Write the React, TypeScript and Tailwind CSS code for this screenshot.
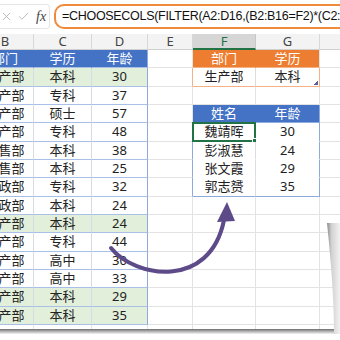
import { Check, X } from "lucide-react";

const widths = ["w-[57px]", "w-[58px]", "w-[56px]", "w-[45px]", "w-[63px]", "w-[64px]", "w-[60px]"];
const letters = ["B", "C", "D", "E", "F", "G", "H"];

const data = [
    ["生产部", "本科", "30"],
    ["生产部", "专科", "37"],
    ["生产部", "硕士", "57"],
    ["生产部", "专科", "48"],
    ["销售部", "本科", "38"],
    ["销售部", "本科", "25"],
    ["行政部", "专科", "32"],
    ["行政部", "本科", "24"],
    ["生产部", "本科", "24"],
    ["生产部", "专科", "44"],
    ["生产部", "高中", "30"],
    ["生产部", "高中", "33"],
    ["生产部", "本科", "29"],
    ["生产部", "本科", "35"],
];

const result = [
    ["魏靖晖", "30"],
    ["彭淑慧", "24"],
    ["张文霞", "29"],
    ["郭志赟", "35"],
];

// right border colour between (r, c) and its neighbour
function rightLine(r: number, c: number) {
    if (c <= 1 && r >= 1 && r <= 15) return r === 1 ? "border-r-[#4472c4]" : "border-r-[#d6dbe4]";
    if (c === 2 && r <= 15) return "border-r-[#8ea9db]";
    if (c === 3) {
        if (r === 2) return "border-r-[#f4b183]";
        if (r >= 5 && r <= 8) return "border-r-[#8ea9db]";
    }
    if (c === 4) {
        if (r === 1) return "border-r-[#ed7d31]";
        if (r === 4) return "border-r-[#4472c4]";
        if (r === 2 || (r >= 5 && r <= 8)) return "border-r-[#dcdcdc]";
    }
    if (c === 5) {
        if (r === 2) return "border-r-[#f4b183]";
        if (r >= 4 && r <= 8) return "border-r-[#8ea9db]";
    }
    return "border-r-[#e3e3e3]";
}

function bottomLine(r: number, c: number) {
    if (c <= 2 && r <= 15) return "border-b-[#a9bfe6]";
    if (c === 4 || c === 5) {
        if (r === 1 || r === 2) return "border-b-[#f4b183]";
        if (r === 4 || r === 8) return "border-b-[#8ea9db]";
        if (r >= 5 && r <= 7) return "border-b-white";
    }
    return "border-b-[#e3e3e3]";
}

function cell(r: number, c: number) {
    let text = "";
    let bg = "bg-white";
    let color = "text-[#222]";

    if (c <= 2) {
        if (r === 1) {
            text = ["部门", "学历", "年龄"][c];
            bg = "bg-[#4472c4]";
            color = "text-white";
        } else if (r <= 15) {
            const row = data[r - 2];
            text = row[c];
            if (row[0] === "生产部" && row[1] === "本科") bg = "bg-[#e2efda]";
        }
    }
    if (c === 4 || c === 5) {
        if (r === 1) {
            text = c === 4 ? "部门" : "学历";
            bg = "bg-[#ed7d31]";
            color = "text-white";
        } else if (r === 2) {
            text = c === 4 ? "生产部" : "本科";
        } else if (r === 4) {
            text = c === 4 ? "姓名" : "年龄";
            bg = "bg-[#4472c4]";
            color = "text-white";
        } else if (r >= 5 && r <= 8) {
            text = result[r - 5][c - 4];
        }
    }
    return { text, bg, color };
}

export default function App() {
    const rows = Array.from({ length: 15 }, (_, i) => i + 1);

    return (
        <div className="relative h-[340px] w-[340px] overflow-hidden bg-white font-['Noto_Sans','Noto_Sans_CJK_SC',sans-serif]">
            {/* Formula bar */}
            <div className="flex h-[34px] items-start pt-[4px]">
                <div className="flex h-[25px] w-[50px] shrink-0 items-center rounded-r-[4px] border border-l-0 border-[#e6e6e6] bg-white">
                    <X size={13} strokeWidth={1.4} className="text-[#a8a8a8]" />
                    <Check size={13} strokeWidth={1.4} className="ml-[4px] text-[#a8a8a8]" />
                    <span className="ml-[6px] font-['Liberation_Serif',serif] text-[14px] italic leading-none text-[#444]">
                        fx
                    </span>
                </div>
                <div className="ml-[4px] flex h-[25px] flex-1 items-center rounded-l-[10px] border-2 border-r-0 border-[#ee8a3a] pl-[6px]">
                    <span className="whitespace-nowrap font-['Liberation_Sans',sans-serif] text-[12.5px] leading-none tracking-[-0.3px] text-[#111]">
                        =CHOOSECOLS(FILTER(A2:D16,(B2:B16=F2)*(C2:C16=G2)),2,4)
                    </span>
                </div>
            </div>

            {/* Column letters */}
            <div className="-ml-[23px] flex h-[16px]">
                {letters.map((l, c) => (
                    <div
                        key={l}
                        className={`${widths[c]} flex shrink-0 items-center justify-center border-r border-b text-[13px] leading-none ${
                            c === 4
                                ? "border-r-[#c8c8c8] border-b-2 border-b-[#217346] bg-[#d6d6d6] text-[#217346]"
                                : "border-r-[#d8d8d8] border-b-[#cfcfcf] bg-[#f3f3f3] text-[#444]"
                        }`}
                    >
                        {l}
                    </div>
                ))}
            </div>

            {/* Sheet rows */}
            <div className="-ml-[23px]">
                {rows.map((r) => (
                    <div key={r} className="flex h-[18.33px]">
                        {letters.map((l, c) => {
                            const { text, bg, color } = cell(r, c);
                            return (
                                <div
                                    key={l}
                                    className={`${widths[c]} relative flex shrink-0 items-center justify-center border-r border-b text-[13px] leading-none ${bg} ${color} ${rightLine(r, c)} ${bottomLine(r, c)}`}
                                >
                                    {text}
                                    {r === 5 && c === 4 && (
                                        <div className="absolute -top-px -left-px -right-px -bottom-px border-2 border-[#217346]">
                                            <div className="absolute -right-[3px] -bottom-[3px] h-[5px] w-[5px] border border-white bg-[#217346]" />
                                        </div>
                                    )}
                                    {r === 2 && c === 5 && (
                                        <div className="absolute right-[1px] bottom-[1px] h-[4px] w-[4px] bg-[linear-gradient(135deg,transparent_50%,#5b5ea6_50%)]" />
                                    )}
                                </div>
                            );
                        })}
                    </div>
                ))}
                {/* partial row under the table */}
                <div className="flex h-[4px]">
                    {letters.map((l, c) => (
                        <div key={l} className={`${widths[c]} shrink-0 border-r border-r-[#e3e3e3]`} />
                    ))}
                </div>
            </div>

            {/* page curl shadow at the bottom */}
            <div className="h-[5px] w-[336px] bg-linear-to-b from-[#6f6f6f] via-[#b5b5b5] to-[#f4f4f4]" />

            {/* Arrow and curl drawing */}
            <svg className="pointer-events-none absolute inset-0" width="340" height="340" viewBox="0 0 340 340">
                <defs>
                    <linearGradient id="curl" x1="0" y1="0" x2="1" y2="0">
                        <stop offset="0" stopColor="#8a8a8a" />
                        <stop offset="0.35" stopColor="#d2d2d2" />
                        <stop offset="1" stopColor="#f2f2f2" />
                    </linearGradient>
                </defs>
                <path d="M327 223 C 331 260, 334 300, 334 334 L 340 334 L 340 223 Z" fill="url(#curl)" />
                <path
                    d="M111 248 C 135 278, 210 290, 224 220"
                    fill="none"
                    stroke="#5d4a88"
                    strokeWidth="4"
                    strokeLinecap="round"
                />
                <polygon points="227,202 217,222 235,221" fill="#5d4a88" />
            </svg>
        </div>
    );
}
